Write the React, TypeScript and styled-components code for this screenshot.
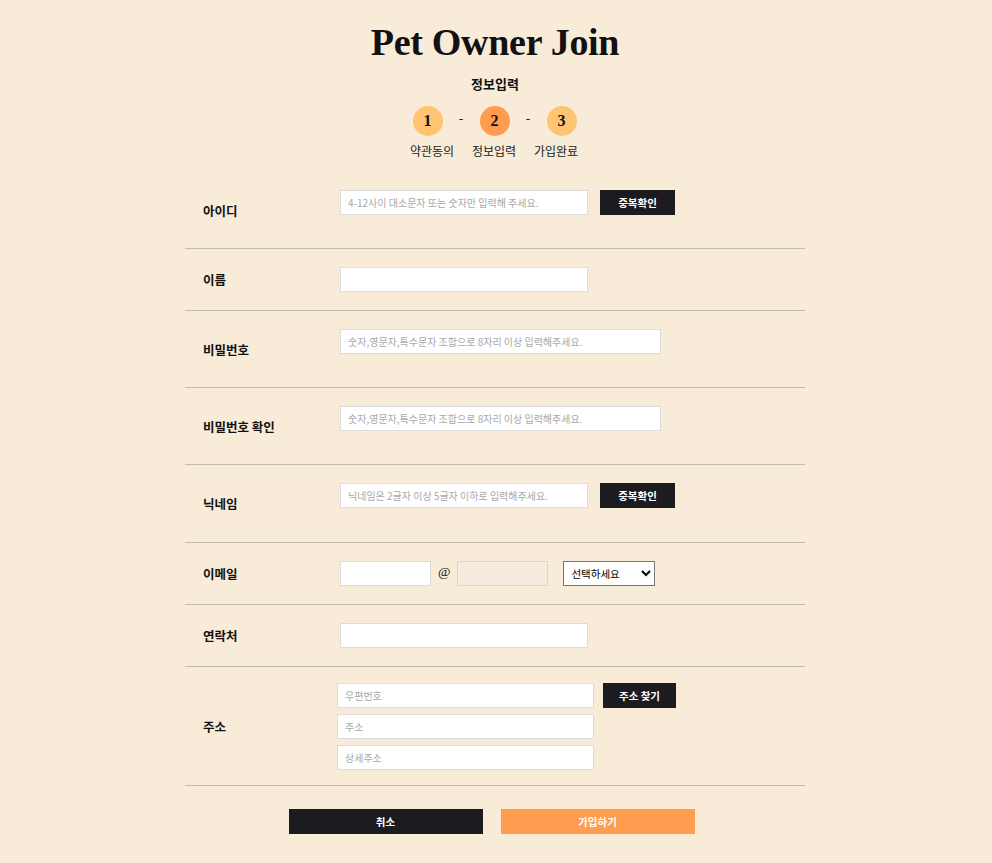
import React from 'react';
import styled, {createGlobalStyle} from 'styled-components';

const GlobalStyle = createGlobalStyle`
  html, body {
    margin: 0;
    padding: 0;
    background: #f8ebd8;
  }
  body {
    font-family: 'Noto Sans CJK KR', 'Noto Sans', sans-serif;
    color: #111;
  }
  * {
    box-sizing: border-box;
  }
`;

const Page = styled.div`
  width: 620px;
  margin-left: calc(50% - 311px);
  padding: 17px 0 30px;
`;

const Header = styled.div`
  display: flex;
  flex-direction: column;
  align-items: center;
`;

const Title = styled.h1`
  margin: 0;
  font-family: 'Liberation Serif', 'DejaVu Serif', serif;
  font-size: 38px;
  font-weight: 700;
  letter-spacing: -0.3px;
  line-height: 50px;
`;

const SubTitle = styled.h2`
  margin: 8px 0 0;
  font-size: 13px;
  font-weight: 700;
  line-height: 18px;
`;

const Circles = styled.div`
  display: flex;
  align-items: center;
  gap: 10px;
  margin-top: 13px;
  margin-left: -1px;
`;

const Circle = styled.div<{$active?: boolean}>`
  width: 30px;
  height: 30px;
  border-radius: 50%;
  background: ${p => (p.$active ? '#ff9c50' : '#ffc472')};
  display: flex;
  align-items: center;
  justify-content: center;
  font-family: 'Liberation Serif', 'DejaVu Serif', serif;
  font-weight: 700;
  font-size: 16px;
`;

const Dash = styled.span`
  width: 17px;
  text-align: center;
  font-size: 13px;
  line-height: 20px;
  margin-top: -6px;
`;

const StepLabels = styled.div`
  display: grid;
  grid-template-columns: 62px 62px 62px;
  margin-top: 6px;
  margin-left: -2px;
`;

const StepLabel = styled.div`
  text-align: center;
  font-size: 12px;
  line-height: 18px;
  color: #222;
`;

const Form = styled.div`
  margin-top: 12px;
`;

const Row = styled.div<{$pad?: string}>`
  display: grid;
  grid-template-columns: 155px 1fr;
  padding: ${p => p.$pad || '18px 0 18px'};
  border-bottom: 1px solid #c3bbb1;
`;

const Label = styled.div`
  align-self: center;
  padding-left: 18px;
  font-size: 12.5px;
  font-weight: 700;
`;

const Field = styled.div<{$msg?: boolean}>`
  display: flex;
  align-items: flex-start;
  gap: 12px;
  padding-bottom: ${p => (p.$msg ? '15px' : '0')};
`;

const Input = styled.input<{$w?: number}>`
  width: ${p => p.$w || 248}px;
  height: 25px;
  border: 1px solid #dcdcdc;
  background: #fff;
  padding: 0 7px;
  font-size: 10px;
  font-family: 'Noto Sans CJK KR', sans-serif;
  outline: none;
  &::placeholder {
    color: #a9a9a9;
  }
  &:disabled {
    background: #f6ebde;
    border-color: #dcd5cc;
  }
`;

const DarkButton = styled.button<{$w?: number}>`
  width: ${p => p.$w || 75}px;
  height: 25px;
  border: none;
  background: #1c1b1f;
  color: #fff;
  font-size: 10.5px;
  font-weight: 700;
  font-family: 'Noto Sans CJK KR', sans-serif;
  cursor: pointer;
`;

const EmailField = styled.div`
  display: flex;
  align-items: flex-start;
  gap: 7px;
`;

const At = styled.span`
  font-family: 'Liberation Serif', serif;
  font-size: 13.5px;
  line-height: 22px;
`;

const Select = styled.select`
  width: 92px;
  height: 25px;
  margin-left: 8px;
  border: 1px solid #767676;
  border-radius: 0;
  background: #fff;
  font-size: 10.5px;
  font-family: 'Noto Sans CJK KR', sans-serif;
  padding: 0 3px;
`;

const AddressGrid = styled.div`
  display: grid;
  grid-template-columns: 257px 82px;
  column-gap: 9px;
  row-gap: 6px;
  margin-left: -3px;
  align-items: start;
`;

const Actions = styled.div`
  display: flex;
  justify-content: center;
  gap: 18px;
  margin-top: 23px;
  margin-right: 7px;
`;

const ActionButton = styled.button<{$primary?: boolean}>`
  width: 194px;
  height: 25px;
  border: none;
  background: ${p => (p.$primary ? '#ff9c50' : '#1c1b1f')};
  color: #fff;
  font-size: 10.5px;
  font-weight: 700;
  font-family: 'Noto Sans CJK KR', sans-serif;
  cursor: pointer;
`;

const steps = ['약관동의', '정보입력', '가입완료'];

const App: React.FC = () => {
  return (
    <Page>
      <GlobalStyle />
      <Header>
        <Title>Pet Owner Join</Title>
        <SubTitle>정보입력</SubTitle>
        <Circles>
          {steps.map((s, i) => (
            <React.Fragment key={s}>
              {i > 0 && <Dash>-</Dash>}
              <Circle $active={i === 1}>{i + 1}</Circle>
            </React.Fragment>
          ))}
        </Circles>
        <StepLabels>
          {steps.map(s => (
            <StepLabel key={s}>{s}</StepLabel>
          ))}
        </StepLabels>
      </Header>

      <Form>
        <Row>
          <Label>아이디</Label>
          <Field $msg>
            <Input placeholder="4-12사이 대소문자 또는 숫자만 입력해 주세요." />
            <DarkButton>중복확인</DarkButton>
          </Field>
        </Row>
        <Row>
          <Label>이름</Label>
          <Field>
            <Input />
          </Field>
        </Row>
        <Row>
          <Label>비밀번호</Label>
          <Field $msg>
            <Input $w={321} type="password" placeholder="숫자,영문자,특수문자 조합으로 8자리 이상 입력해주세요." />
          </Field>
        </Row>
        <Row>
          <Label>비밀번호 확인</Label>
          <Field $msg>
            <Input $w={321} type="password" placeholder="숫자,영문자,특수문자 조합으로 8자리 이상 입력해주세요." />
          </Field>
        </Row>
        <Row $pad="18px 0 19px">
          <Label>닉네임</Label>
          <Field $msg>
            <Input placeholder="닉네임은 2글자 이상 5글자 이하로 입력해주세요." />
            <DarkButton>중복확인</DarkButton>
          </Field>
        </Row>
        <Row>
          <Label>이메일</Label>
          <EmailField>
            <Input $w={91} />
            <At>@</At>
            <Input $w={91} disabled />
            <Select defaultValue="">
              <option value="">선택하세요</option>
              <option value="naver.com">naver.com</option>
              <option value="gmail.com">gmail.com</option>
              <option value="daum.net">daum.net</option>
            </Select>
          </EmailField>
        </Row>
        <Row>
          <Label>연락처</Label>
          <Field>
            <Input />
          </Field>
        </Row>
        <Row $pad="16px 0 15px">
          <Label>주소</Label>
          <AddressGrid>
            <Input $w={257} placeholder="우편번호" />
            <DarkButton $w={73}>주소 찾기</DarkButton>
            <Input $w={257} placeholder="주소" />
            <span />
            <Input $w={257} placeholder="상세주소" />
          </AddressGrid>
        </Row>
      </Form>

      <Actions>
        <ActionButton>취소</ActionButton>
        <ActionButton $primary>가입하기</ActionButton>
      </Actions>
    </Page>
  );
};

export default App;
